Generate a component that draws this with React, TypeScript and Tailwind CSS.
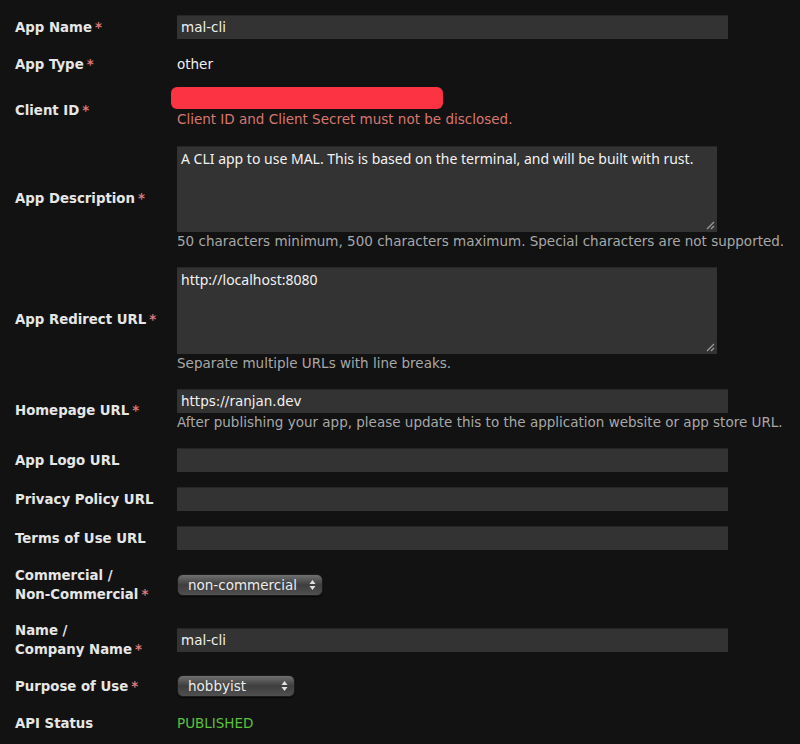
import React from "react";

const V = { fontFamily: '"DejaVu Sans", Verdana, sans-serif' };
const T = { fontFamily: '"Noto Sans", "Open Sans", sans-serif' };

function Star() {
  return <span className="ml-[3px] text-[#d9797a]">*</span>;
}

function Label({ children, req, extra = "" }: { children: React.ReactNode; req?: boolean; extra?: string }) {
  return (
    <div className={`text-[13.3px] leading-[19px] font-bold text-[#e6e6e6] ${extra}`} style={V}>
      {children}
      {req && <Star />}
    </div>
  );
}

function Input({ value }: { value?: string }) {
  return (
    <div
      className="h-[24px] w-[551px] bg-[#333333] border-t border-[#262626] flex items-center pl-[4px] text-[13.5px] text-[#f0f0f0]"
      style={V}
    >
      {value}
    </div>
  );
}

function Help({ children, color = "text-[#a8a8a8]" }: { children: React.ReactNode; color?: string }) {
  return (
    <div className={`text-[13.5px] leading-[17px] whitespace-nowrap ${color}`} style={V}>
      {children}
    </div>
  );
}

function TextArea({ value, h }: { value: string; h: string }) {
  return (
    <div className={`relative w-[540px] ${h} bg-[#333333] border-t border-[#262626] pl-[4px] pt-[3px] text-[14px] leading-[18px] text-[#f2f2f2]`} style={T}>
      {value}
      <svg className="absolute right-[2px] bottom-[2px]" width="10" height="10" viewBox="0 0 10 10">
        <line x1="9" y1="2" x2="2" y2="9" stroke="#9a9a9a" strokeWidth="1.2" />
        <line x1="9" y1="6" x2="6" y2="9" stroke="#9a9a9a" strokeWidth="1.2" />
      </svg>
    </div>
  );
}

function Select({ value, w }: { value: string; w: string }) {
  return (
    <div
      className={`${w} h-[22px] rounded-[6px] border border-[#1c1c1c] bg-gradient-to-b from-[#707070] via-[#3e3e3e] to-[#505050] shadow-[0_1px_1px_rgba(0,0,0,0.6)] flex items-center justify-between pl-[10px] pr-[6px] text-[13.5px] text-[#ececec]`}
      style={V}
    >
      <span>{value}</span>
      <svg width="7" height="12" viewBox="0 0 7 12">
        <polygon points="3.5,1 6.5,5 0.5,5" fill="#e0e0e0" />
        <polygon points="3.5,11 6.5,7 0.5,7" fill="#e0e0e0" />
      </svg>
    </div>
  );
}

function Row({ label, children, mt, labelExtra = "" }: { label: React.ReactNode; children: React.ReactNode; mt: string; labelExtra?: string }) {
  return (
    <div className={`grid grid-cols-[162px_1fr] items-center ${mt}`}>
      <div className={labelExtra}>{label}</div>
      <div>{children}</div>
    </div>
  );
}

export default function App() {
  return (
    <div className="w-[800px] h-[744px] bg-[#121212] pl-[15px] pt-[15px] overflow-hidden">
      <Row label={<Label req>App Name</Label>} mt="mt-0">
        <Input value="mal-cli" />
      </Row>
      <Row label={<Label req>App Type</Label>} mt="mt-[16px]">
        <div className="text-[13.5px] leading-[19px] text-[#f0f0f0]" style={V}>other</div>
      </Row>
      <Row label={<Label req>Client ID</Label>} mt="mt-[13px]" labelExtra="pt-[5px]">
        <div className="h-[22px] w-[272px] -ml-[6px] rounded-[6px] bg-[#fc3343]" />
        <div className="mt-[2px]">
          <Help color="text-[#d8776f]">Client ID and Client Secret must not be disclosed.</Help>
        </div>
      </Row>
      <Row label={<Label req>App Description</Label>} mt="mt-[18px]">
        <TextArea h="h-[86px]" value="A CLI app to use MAL. This is based on the terminal, and will be built with rust." />
        <div className="mt-[1px]">
          <Help>50 characters minimum, 500 characters maximum. Special characters are not supported.</Help>
        </div>
      </Row>
      <Row label={<Label req>App Redirect URL</Label>} mt="mt-[17px]">
        <TextArea h="h-[87px]" value="http://localhost:8080" />
        <div className="mt-[1px]">
          <Help>Separate multiple URLs with line breaks.</Help>
        </div>
      </Row>
      <Row label={<Label req>Homepage URL</Label>} mt="mt-[17px]">
        <Input value="https://ranjan.dev" />
        <div className="mt-[1px]">
          <Help>After publishing your app, please update this to the application website or app store URL.</Help>
        </div>
      </Row>
      <Row label={<Label>App Logo URL</Label>} mt="mt-[17px]">
        <Input />
      </Row>
      <Row label={<Label>Privacy Policy URL</Label>} mt="mt-[15px]">
        <Input />
      </Row>
      <Row label={<Label>Terms of Use URL</Label>} mt="mt-[15px]">
        <Input />
      </Row>
      <Row
        label={
          <Label req>
            Commercial /<br />
            Non-Commercial
          </Label>
        }
        mt="mt-[16px]"
      >
        <Select value="non-commercial" w="w-[146px]" />
      </Row>
      <Row
        label={
          <Label req>
            Name /<br />
            Company Name
          </Label>
        }
        mt="mt-[17px]"
      >
        <Input value="mal-cli" />
      </Row>
      <Row label={<Label req>Purpose of Use</Label>} mt="mt-[16px]">
        <Select value="hobbyist" w="w-[118px]" />
      </Row>
      <Row label={<Label>API Status</Label>} mt="mt-[17px]">
        <div className="text-[13.5px] leading-[19px] text-[#5cc03c]" style={V}>PUBLISHED</div>
      </Row>
    </div>
  );
}
